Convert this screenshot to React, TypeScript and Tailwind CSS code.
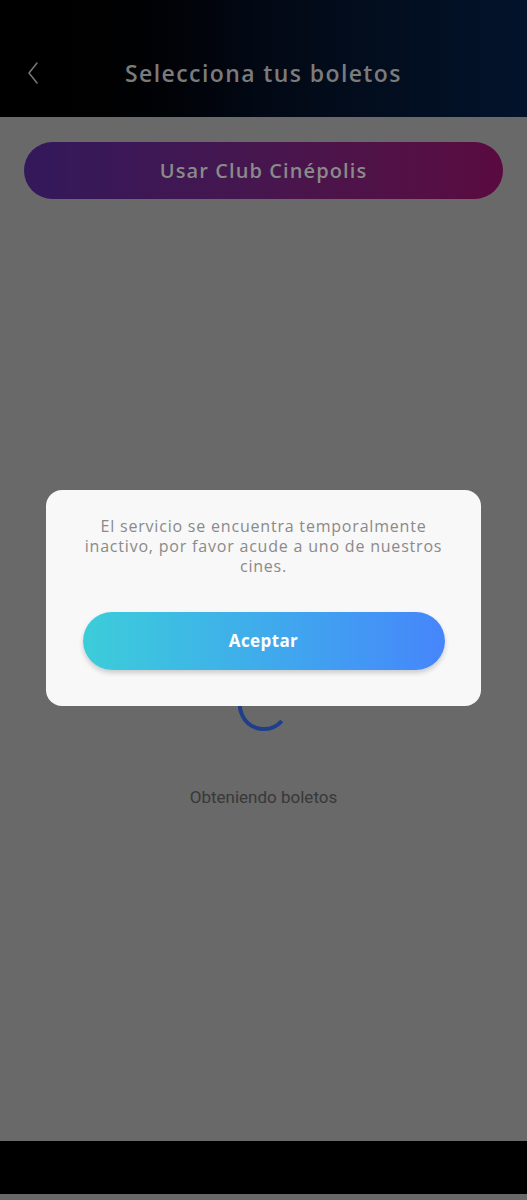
import { useState } from "react";

// El fondo ya va oscurecido (el modal tapa la pantalla)
function Spinner() {
  return (
    <svg viewBox="0 0 56 56" className="h-14 w-14">
      {/* arco de 42° a 270° */}
      <path
        d="M45.8 44 A24 24 0 1 1 28 4"
        fill="none"
        stroke="#1f3f8a"
        strokeWidth="4"
        strokeLinecap="butt"
      />
    </svg>
  );
}

function Header() {
  return (
    <div className="relative flex h-[117px] items-center justify-center bg-gradient-to-r from-black via-[#020915] to-[#03132b]">
      <button aria-label="Regresar" className="absolute left-[22px] top-[61px] flex h-6 w-6 items-center justify-center">
        <svg viewBox="0 0 24 24" fill="none" stroke="#7a7a7a" strokeWidth="1.5" className="h-6 w-6">
          <path d="M15 2 L7 12 L15 22" strokeLinecap="round" strokeLinejoin="round" />
        </svg>
      </button>
      <h1 className="pt-[30px] font-['Open_Sans',sans-serif] text-[23px] font-semibold tracking-[1.4px] text-[#7b7b7b]">
        Selecciona tus boletos
      </h1>
    </div>
  );
}

export default function App() {
  const [open, setOpen] = useState(true);

  return (
    <div className="relative flex h-[1200px] w-full flex-col bg-[#696969]">
      <Header />

      <main className="flex flex-1 flex-col items-center px-6 pt-[25px]">
        <button className="flex h-[57px] w-full items-center justify-center rounded-full bg-gradient-to-r from-[#33185b] to-[#5a0a40] font-['Open_Sans',sans-serif] text-[20px] font-semibold tracking-[1.1px] text-[#8a8a8a]">
          Usar Club Cinépolis
        </button>

        <div className="mt-[478px] flex flex-col items-center">
          <Spinner />
          <p className="mt-[52px] font-['Roboto',sans-serif] text-[17px] text-[#383838]">
            Obteniendo boletos
          </p>
        </div>
      </main>

      <div className="h-[53px] bg-black" />
      <div className="h-[6px] bg-[#696969]" />

      {open && (
        <div className="absolute inset-0 flex items-center justify-center pb-[4px]">
          <div className="flex w-[435px] flex-col items-center rounded-[16px] bg-[#f8f8f8] px-6 pb-[36px] pt-[26px]">
            <p className="whitespace-nowrap text-center font-['Open_Sans',sans-serif] text-[16px] leading-[20px] tracking-[0.8px] text-[#8a8a8a]">
              El servicio se encuentra temporalmente
              <br />
              inactivo, por favor acude a uno de nuestros
              <br />
              cines.
            </p>
            <button
              onClick={() => setOpen(false)}
              className="mt-[36px] flex h-[58px] w-[362px] items-center justify-center rounded-full bg-gradient-to-r from-[#3ccdd9] to-[#4685fb] font-['Open_Sans',sans-serif] text-[17px] font-bold tracking-[0.4px] text-white shadow-[0_3px_5px_rgba(0,0,0,0.18)]"
            >
              Aceptar
            </button>
          </div>
        </div>
      )}
    </div>
  );
}
